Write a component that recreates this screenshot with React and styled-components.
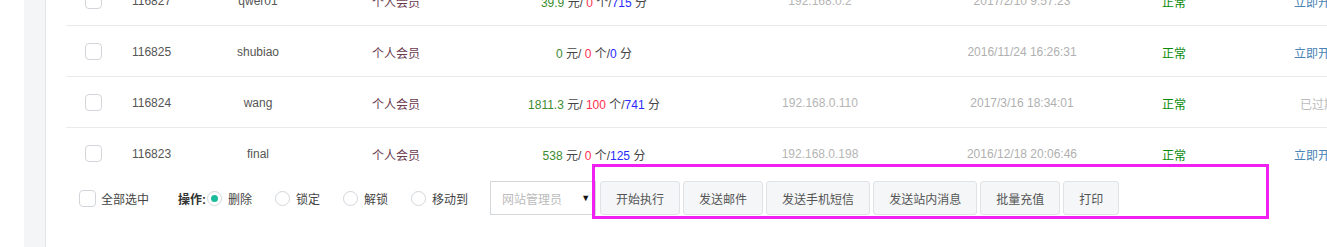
import React from "react";
import styled, { createGlobalStyle } from "styled-components";

const GlobalStyle = createGlobalStyle`
  html, body { margin: 0; padding: 0; background: #fff; overflow: hidden; }
  body { font-family: "Liberation Sans", Arial, "Noto Sans CJK SC", sans-serif; font-size: 12px; color: #555; }
  * { box-sizing: border-box; }
`;

const Page = styled.div`
  display: flex;
  width: 1327px;
  height: 247px;
  overflow: hidden;
`;

const Gutter = styled.div`
  width: 24px;
  flex: none;
`;

const SideStrip = styled.div`
  width: 22px;
  flex: none;
  background: #f3f5f7;
  border-right: 1px solid #e4e7ea;
`;

const Main = styled.div`
  flex: 1;
  min-width: 0;
  overflow: hidden;
`;

const Table = styled.div`
  margin-top: -25px;
  margin-left: 20px;
  width: 1355px;
`;

const Row = styled.div`
  display: grid;
  grid-template-columns: 54px 63px 150px 126px 270px 182px 222px 82px 206px;
  height: ${(p) => (p.$last ? "50px" : "51px")};
  border-bottom: ${(p) => (p.$last ? "none" : "1px solid #e8eaec")};
  align-items: center;
`;

const Cell = styled.div`
  text-align: center;
  white-space: nowrap;
  color: ${(p) => p.$color || "#555"};
  display: flex;
  justify-content: center;
  align-items: center;
  padding-top: ${(p) => (p.$box ? "0" : "2px")};
`;

const Box = styled.span`
  display: inline-block;
  width: 17px;
  height: 17px;
  border: 1px solid #d2d6da;
  border-radius: 4px;
  background: #fff;
  flex: none;
`;

const Num = styled.span`
  color: ${(p) => p.$c};
`;

const Toolbar = styled.div`
  display: flex;
  align-items: center;
  height: 34px;
  margin-top: 3px;
  padding-left: 33px;
`;

const CheckLabel = styled.label`
  display: flex;
  align-items: center;
  gap: 5px;
  color: #444;
  margin-right: 29px;
`;

const OpTitle = styled.span`
  font-weight: bold;
  color: #333;
  margin-right: 1px;
`;

const RadioOption = styled.label`
  display: flex;
  align-items: center;
  gap: 6px;
  color: #444;
  margin-right: ${(p) => p.$mr || "23px"};
`;

const Radio = styled.span`
  width: 15px;
  height: 15px;
  border-radius: 50%;
  border: 1px solid #d2d6da;
  background: #fff;
  display: flex;
  align-items: center;
  justify-content: center;
  flex: none;
  &::after {
    content: "";
    width: 7px;
    height: 7px;
    border-radius: 50%;
    background: ${(p) => (p.$checked ? "#1abc9c" : "transparent")};
  }
`;

const Select = styled.div`
  width: 106px;
  height: 34px;
  border: 1px solid #d4d7da;
  display: flex;
  align-items: center;
  justify-content: space-between;
  padding: 0 5px 0 11px;
  color: #bbb;
  font-size: 12px;
  margin-right: 4px;
`;

const Caret = styled.span`
  color: #111;
  font-size: 9px;
`;

const ButtonGroup = styled.div`
  position: relative;
  display: flex;
  gap: 3px;
`;

const Button = styled.button`
  height: 34px;
  padding: 0 15px;
  border: 1px solid #e0e3e6;
  border-radius: 3px;
  background: #f4f6f8;
  color: #555;
  font-family: inherit;
  font-size: 12px;
  cursor: pointer;
`;

const Highlight = styled.div`
  position: absolute;
  left: -8px;
  top: -17px;
  width: 677px;
  height: 55px;
  border: 3px solid #f21ff2;
  pointer-events: none;
`;

const rows = [
  { id: "116827", name: "qwer01", money: ["39.9", "0", "715"], ip: "192.168.0.2", date: "2017/2/10 9:57:23", op: "立即开通", active: true },
  { id: "116825", name: "shubiao", money: ["0", "0", "0"], ip: "", date: "2016/11/24 16:26:31", op: "立即开通", active: true },
  { id: "116824", name: "wang", money: ["1811.3", "100", "741"], ip: "192.168.0.110", date: "2017/3/16 18:34:01", op: "已过期", active: false },
  { id: "116823", name: "final", money: ["538", "0", "125"], ip: "192.168.0.198", date: "2016/12/18 20:06:46", op: "立即开通", active: true },
];

const buttons = ["开始执行", "发送邮件", "发送手机短信", "发送站内消息", "批量充值", "打印"];

export default function App() {
  return (
    <>
      <GlobalStyle />
      <Page>
        <Gutter />
        <SideStrip />
        <Main>
          <Table>
            {rows.map((r, i) => (
              <Row key={r.id} $last={i === rows.length - 1}>
                <Cell $box><Box /></Cell>
                <Cell>{r.id}</Cell>
                <Cell>{r.name}</Cell>
                <Cell $color="#6b3a4e">个人会员</Cell>
                <Cell $color="#444">
                  <span>
                    <Num $c="#3d8c2f">{r.money[0]}</Num> 元/ <Num $c="#ff2f4f">{r.money[1]}</Num> 个/<Num $c="#2a2aff">{r.money[2]}</Num> 分
                  </span>
                </Cell>
                <Cell $color="#b5b5b5">{r.ip}</Cell>
                <Cell $color="#b0b0b0">{r.date}</Cell>
                <Cell $color="#0a8a0a">正常</Cell>
                <Cell $color={r.active ? "#4a84b5" : "#bbb"}>{r.op}</Cell>
              </Row>
            ))}
          </Table>
          <Toolbar>
            <CheckLabel><Box />全部选中</CheckLabel>
            <OpTitle>操作:</OpTitle>
            <RadioOption><Radio $checked />删除</RadioOption>
            <RadioOption><Radio />锁定</RadioOption>
            <RadioOption><Radio />解锁</RadioOption>
            <RadioOption $mr="22px"><Radio />移动到</RadioOption>
            <Select>网站管理员<Caret>▼</Caret></Select>
            <ButtonGroup>
              {buttons.map((b) => (
                <Button key={b}>{b}</Button>
              ))}
              <Highlight />
            </ButtonGroup>
          </Toolbar>
        </Main>
      </Page>
    </>
  );
}
